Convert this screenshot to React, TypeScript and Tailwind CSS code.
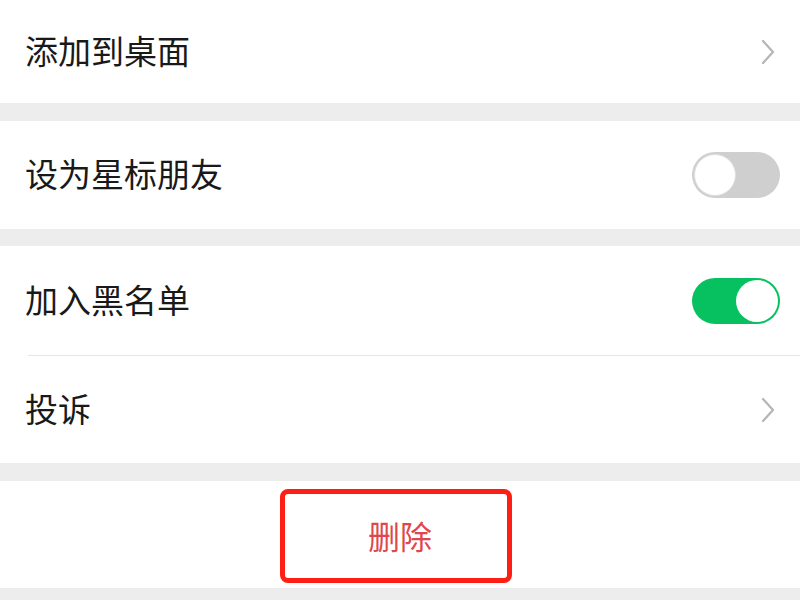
const font = { fontFamily: '"Noto Sans CJK SC", "Noto Sans", sans-serif' };

function Chevron() {
  return (
    <svg width="16" height="26" viewBox="0 0 16 26" fill="none" className="mr-[24px]">
      <path d="M3 2 L13 13 L3 24" stroke="#b5b5b5" strokeWidth="2.2" strokeLinecap="round" strokeLinejoin="round" />
    </svg>
  );
}

function Toggle({ on }: { on: boolean }) {
  return (
    <div
      className={`mr-[20px] flex h-[46px] w-[88px] items-center rounded-full p-[2px] ${
        on ? 'justify-end bg-[#07c160]' : 'justify-start bg-[#cfcfcf]'
      }`}
    >
      <div className={`h-[42px] w-[42px] rounded-full bg-white ${on ? '' : 'border border-[#e0e0e0]'}`} />
    </div>
  );
}

function Row({ label, children, className = 'h-[108px]' }: { label: string; children: React.ReactNode; className?: string }) {
  return (
    <div className={`flex items-center justify-between bg-white pl-[25px] ${className}`}>
      <span className="mt-[-3px] text-[33px] leading-none text-[#191919]">{label}</span>
      {children}
    </div>
  );
}

export default function App() {
  return (
    <div className="flex h-[600px] w-[800px] flex-col overflow-hidden bg-[#ededed]" style={font}>
      <Row label="添加到桌面" className="h-[103px]">
        <Chevron />
      </Row>
      <div className="mt-[18px]">
        <Row label="设为星标朋友">
          <Toggle on={false} />
        </Row>
      </div>
      <div className="mt-[17px] bg-white">
        <Row label="加入黑名单" className="h-[109px]">
          <Toggle on />
        </Row>
        <div className="ml-[28px] h-px bg-[#e5e5e5]" />
        <Row label="投诉" className="h-[107px]">
          <Chevron />
        </Row>
      </div>
      <div className="mt-[18px] flex h-[107px] items-start justify-center bg-white pt-[8px]">
        <div className="ml-[-8px] flex h-[94px] w-[232px] items-center justify-center rounded-[8px] border-[5px] border-[#ff1e14]">
          <span className="ml-[8px] mt-[-2px] text-[32px] leading-none text-[#e0474c]">删除</span>
        </div>
      </div>
    </div>
  );
}
